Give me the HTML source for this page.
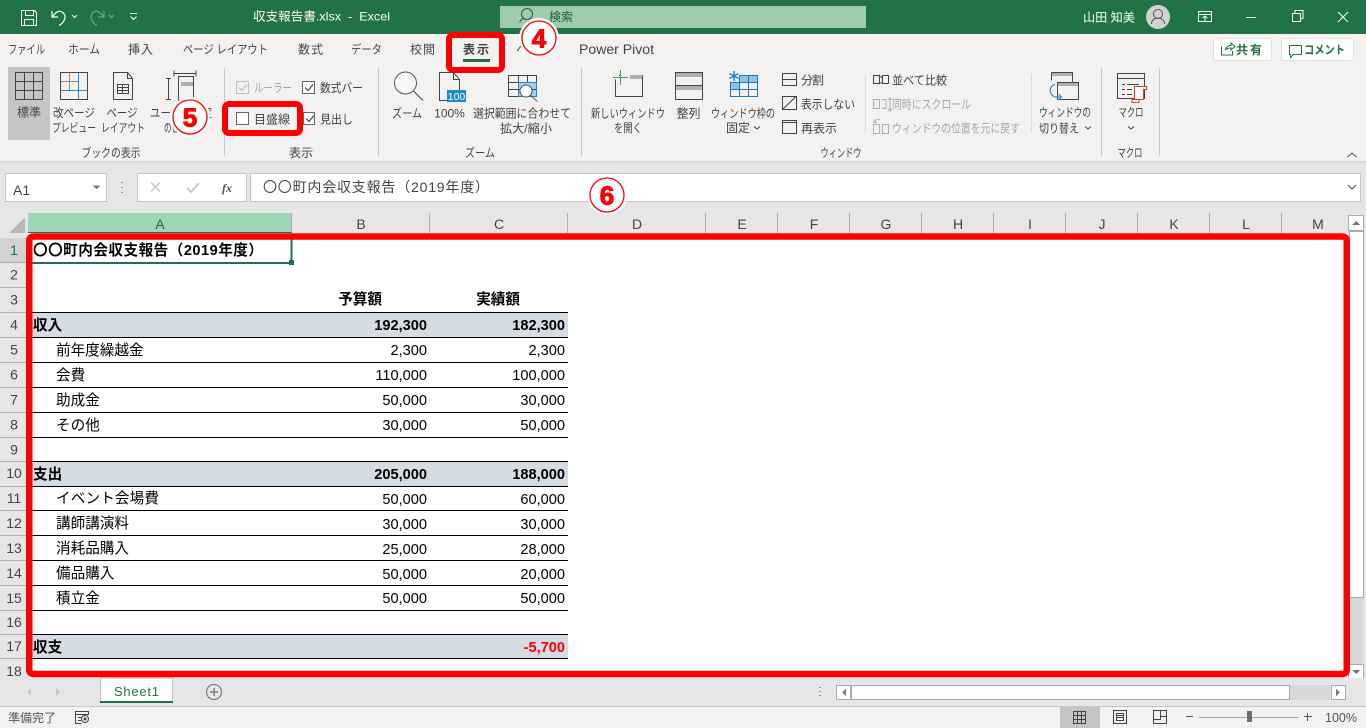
<!DOCTYPE html>
<html lang="ja"><head><meta charset="utf-8"><title>収支報告書.xlsx - Excel</title>
<style>
html,body{margin:0;padding:0;width:1366px;height:728px;overflow:hidden;background:#fff}
svg{display:block;font-family:"Liberation Sans","Noto Sans CJK JP",sans-serif}
text{white-space:pre}
.t{font-size:12px;fill:#444}
.d{font-size:12px;fill:#a6a6a6}
.m{text-anchor:middle}
.e{text-anchor:end}
.w{font-size:12px;fill:#fff}
.tab{font-size:12px;fill:#444}
.h{font-size:14px;fill:#444;text-anchor:middle}
.c{font-size:14.6px;fill:#000}
.b{font-size:14.6px;fill:#000;font-weight:bold}
.n{font-size:14.6px;fill:#000;text-anchor:end}
.nb{font-size:14.6px;fill:#000;font-weight:bold;text-anchor:end}
.r{shape-rendering:crispEdges}
.i{fill:none;stroke:#444;stroke-width:1}
.l{fill:none;stroke:#b0b0b0;stroke-width:1;shape-rendering:crispEdges}
</style></head><body>
<svg width="1366" height="728" viewBox="0 0 1366 728" xmlns="http://www.w3.org/2000/svg">
<!-- backgrounds -->
<rect class="r" width="1366" height="728" fill="#e6e6e6"/>
<rect class="r" width="1366" height="34" fill="#217346"/>
<rect class="r" y="34" width="1366" height="127" fill="#f3f2f1"/>
<rect class="r" y="161" width="1366" height="1" fill="#d4d3d2"/>
<rect class="r" y="162" width="1366" height="2" fill="#dedddc"/>
<!-- title bar -->
<g fill="none" stroke="#fff" stroke-width="1">
<path d="M21.5 10.5h13l2 2v13h-15zM25.5 10.5v5h8v-5M24.5 25.5v-6h9v6"/>
<path d="M52 11v6h6M52.5 16.5c3-4 6-6 8.500-5 4 1.500 5 6 3 9-1 2-3 4-5 5" stroke-width="1.200"/>
<path d="M72 15l2.500 2.500 2.500-2.500"/>
<g stroke="#7fae93"><path d="M104 11v6h-6M103.500 16.500c-3-4-6-6-8.500-5-4 1.500-5 6-3 9 1 2 3 4 5 5"/><path d="M109 15l2.500 2.500 2.500-2.500"/></g>
<path d="M130 13.500h7M130.500 16.500l3 3 3-3"/>
<path d="M1198.500 11.500h13v10h-13zM1198.500 14.500h13M1205 21v-5M1202.500 18l2.500-2 2.500 2"/>
<path d="M1246 17.500h10"/>
<path d="M1292.500 13.500h8v8h-8zM1295 13v-2.500h8v8h-2.500"/>
<path d="M1338 12l10 10M1348 12l-10 10"/>
</g>
<text class="w" x="253" y="20.500" textLength="137" lengthAdjust="spacingAndGlyphs">収支報告書.xlsx  -  Excel</text>
<rect class="r" x="500" y="6" width="366" height="22" fill="#9fcbb0"/>
<circle cx="527" cy="14" r="5.500" fill="none" stroke="#1d5f3a" stroke-width="1"/>
<path d="M523 18l-3.500 4" stroke="#1d5f3a" fill="none"/>
<text x="549" y="21" font-size="12" fill="#1d5f3a" textLength="24">検索</text>
<text class="w" x="1083" y="21.500" textLength="52" lengthAdjust="spacingAndGlyphs">山田 知美</text>
<circle cx="1158" cy="17" r="12" fill="#d2d2d2"/>
<circle cx="1158" cy="14" r="4.500" fill="none" stroke="#555"/>
<path d="M1151.500 24c0-4 3-6 6.500-6s6.500 2 6.500 6" fill="none" stroke="#555"/>
<!-- tabs -->
<text class="tab" x="8" y="53.500" textLength="37" lengthAdjust="spacingAndGlyphs">ファイル</text>
<text class="tab" x="68" y="53.500" textLength="32" lengthAdjust="spacingAndGlyphs">ホーム</text>
<text class="tab" x="128" y="53.500" textLength="25">挿入</text>
<text class="tab" x="183" y="53.500" textLength="85" lengthAdjust="spacingAndGlyphs">ページ レイアウト</text>
<text class="tab" x="298" y="53.500" textLength="25">数式</text>
<text class="tab" x="351" y="53.500" textLength="31" lengthAdjust="spacingAndGlyphs">データ</text>
<text class="tab" x="410" y="53.500" textLength="25">校閲</text>
<text class="tab" x="463" y="53.500" textLength="26" font-weight="bold">表示</text>
<rect class="r" x="463" y="59" width="27" height="3" fill="#217346"/>
<text class="tab" x="516" y="53.500" textLength="36" lengthAdjust="spacingAndGlyphs">ヘルプ</text>
<text x="579" y="54" style="font-size:13.5px;fill:#444" textLength="75" lengthAdjust="spacingAndGlyphs">Power Pivot</text>
<rect x="1213.500" y="38.500" width="58" height="22" rx="2" fill="#fff" stroke="#e3e1df"/>
<rect x="1281.500" y="38.500" width="72" height="22" rx="2" fill="#fff" stroke="#e3e1df"/>
<path d="M1221.500 46.500v8.500h11v-4M1225 50c1-3 3-4.500 6-4.500v-2.500l4 3.500-4 3.500v-2c-2 0-4 .500-6 2" fill="none" stroke="#217346"/>
<text x="1236" y="54" font-size="12" font-weight="bold" fill="#217346" textLength="26">共有</text>
<path d="M1289.500 45.500h12v9h-8l-3 3v-3h-1z" fill="none" stroke="#217346"/>
<text x="1304" y="54" font-size="12" font-weight="bold" fill="#217346" textLength="41" lengthAdjust="spacingAndGlyphs">コメント</text>
<!-- ribbon: book views -->
<rect class="r" x="8" y="67" width="42" height="73" fill="#c6c5c3"/>
<g class="i r">
<path d="M15.500 72.500h27v27h-27zM24.500 72.500v27M33.500 72.500v27M15.500 81.500h27M15.500 90.500h27"/>
<path d="M60.500 72.500h27v27h-27z"/>
<path d="M113.500 72.500h14l5 6v21h-19zM127.500 72.500v6h5"/>
<path d="M117.500 84.500h11v9h-11zM117.500 87.500h11M117.500 90.500h11M122.500 84.500v9"/>
<path d="M174 73.500h22M174 70.500v6M196 70.500v6M178.500 76.500h15v24h-15zM168.500 78.500v21M166 78.500h5M166 99.500h5"/>
</g>
<path d="M60.500 81.500h18M69.500 72.500v18" fill="none" stroke="#888" class="r"/>
<path d="M60.500 90.500h27M78.500 72.500v27" fill="none" stroke="#1f8ad6" stroke-width="1" class="r"/>
<rect class="r" x="181" y="82" width="12" height="4" fill="#b0b0b0"/>
<text class="t m" x="29" y="116.500">標準</text>
<text class="t m" x="74" y="117" textLength="42" lengthAdjust="spacingAndGlyphs">改ページ</text>
<text class="t m" x="74" y="132" textLength="44" lengthAdjust="spacingAndGlyphs">プレビュー</text>
<text class="t m" x="122" y="117" textLength="31" lengthAdjust="spacingAndGlyphs">ページ</text>
<text class="t m" x="123" y="132" textLength="44" lengthAdjust="spacingAndGlyphs">レイアウト</text>
<text class="t" x="150" y="117" textLength="62" lengthAdjust="spacingAndGlyphs">ユーザー設定</text>
<text class="t" x="164" y="132" textLength="30" lengthAdjust="spacingAndGlyphs">のビュー</text>
<text class="t m" x="111" y="157" textLength="59" lengthAdjust="spacingAndGlyphs">ブックの表示</text>
<rect class="r" x="224" y="68" width="1" height="88" fill="#c8c6c4"/>
<!-- show -->
<g fill="#fff" stroke="#666" class="r">
<rect x="302.500" y="81.500" width="12" height="12"/>
<rect x="303.500" y="112.500" width="11" height="12"/>
<rect x="236.500" y="112.500" width="12" height="12"/>
</g>
<rect x="236.500" y="81.500" width="12" height="12" fill="#f3f2f1" stroke="#c0c0c0" class="r"/>
<path d="M239 87.500l3 3 5-6" fill="none" stroke="#c0c0c0" stroke-width="1.200"/>
<path d="M305 87.500l3 3 5-6" fill="none" stroke="#444" stroke-width="1.200"/>
<path d="M306 118.500l3 3 5-6" fill="none" stroke="#444" stroke-width="1.200"/>
<text class="d" x="254" y="92" textLength="38" lengthAdjust="spacingAndGlyphs">ルーラー</text>
<text class="t" x="320" y="92" textLength="43" lengthAdjust="spacingAndGlyphs">数式バー</text>
<text class="t" x="254" y="123.500" textLength="36">目盛線</text>
<text class="t" x="320" y="123.500" textLength="33" lengthAdjust="spacingAndGlyphs">見出し</text>
<text class="t m" x="301" y="157">表示</text>
<rect class="r" x="378" y="68" width="1" height="88" fill="#c8c6c4"/>
<!-- zoom -->
<circle cx="405.500" cy="83" r="11" fill="#fff" fill-opacity=".4" stroke="#555"/>
<path d="M413.500 91l9.500 9.500" fill="none" stroke="#555" stroke-width="1.200"/>
<path class="i r" d="M439.500 72.500h14l6 7v21h-20zM453.500 72.500v7h6"/>
<rect class="r" x="447" y="90" width="19" height="12" fill="#1e88d0"/>
<text x="456.500" y="100" font-size="10.500" fill="#fff" text-anchor="middle">100</text>
<text class="t m" x="407" y="117.500" textLength="30" lengthAdjust="spacingAndGlyphs">ズーム</text>
<text class="t m" x="449.500" y="117.500">100%</text>
<text class="t m" x="522" y="117.500" textLength="98" lengthAdjust="spacingAndGlyphs">選択範囲に合わせて</text>
<text class="t m" x="526" y="132.500" textLength="52" lengthAdjust="spacingAndGlyphs">拡大/縮小</text>
<rect class="r" x="518" y="82" width="18" height="15" fill="#a6cfee"/>
<path class="i r" d="M508.500 75.500h28v21h-28zM508.500 82.500h28M508.500 89.500h28M518.500 75.500v21M527.500 75.500v7"/>
<path class="r" d="M518.500 82.500h18v14h-18z" fill="none" stroke="#1e88d0"/>
<circle cx="526" cy="91" r="6" fill="#fff" stroke="#555"/>
<path d="M530.500 95.500l7 6" stroke="#555" fill="none"/>
<text class="t m" x="480" y="157" textLength="30" lengthAdjust="spacingAndGlyphs">ズーム</text>
<rect class="r" x="581" y="68" width="1" height="88" fill="#c8c6c4"/>
<!-- window -->
<rect class="r" x="630" y="75" width="13" height="4" fill="#b0b0b0"/>
<path class="i r" d="M615.500 79.500v17h27v-21M620 75.500h-1M615.500 83.500v-2"/>
<path d="M613 77.500h15M620.500 70v15" stroke="#37a866" fill="none" class="r"/>
<path class="i r" d="M675.500 72.500h27v27h-27zM675.500 85.500h27"/>
<rect class="r" x="676" y="73" width="26" height="4" fill="#b0b0b0"/>
<rect class="r" x="676" y="86" width="26" height="4" fill="#b0b0b0"/>
<rect class="r" x="740" y="75" width="18" height="7" fill="#8dc1ea"/>
<rect class="r" x="730" y="82" width="10" height="7" fill="#8dc1ea"/>
<path d="M730.500 81.500v15h27v-21h-18v21M730.500 82.500h27M730.500 89.500h27M748.500 75.500v21" fill="none" stroke="#1e78c0" class="r"/>
<path d="M734 71v10M729.500 73.500l9 5M738.500 73.500l-9 5" stroke="#1e88d0" stroke-width="1.500" fill="none"/>
<text class="t m" x="628" y="117.500" textLength="74" lengthAdjust="spacingAndGlyphs">新しいウィンドウ</text>
<text class="t m" x="628" y="132" textLength="28" lengthAdjust="spacingAndGlyphs">を開く</text>
<text class="t m" x="688.500" y="117.500">整列</text>
<text class="t m" x="743" y="117.500" textLength="64" lengthAdjust="spacingAndGlyphs">ウィンドウ枠の</text>
<text class="t" x="726" y="132" textLength="24">固定</text>
<path d="M754 126.500l3 2.500 3-2.500" fill="none" stroke="#444"/>
<path class="i r" d="M782.500 73.500h14v12h-14zM782.500 79.500h14"/>
<path class="i r" d="M782.500 96.500h14v13h-14z"/>
<path d="M783 109l13-12.500" stroke="#444" fill="none"/>
<path class="i r" d="M782.500 120.500h14v13h-14zM782.500 122.500h14"/>
<text class="t" x="801" y="84.500" textLength="23">分割</text>
<text class="t" x="801" y="108.500" textLength="54" lengthAdjust="spacingAndGlyphs">表示しない</text>
<text class="t" x="801" y="132.500" textLength="36">再表示</text>
<rect class="r" x="865" y="74" width="1" height="59" fill="#dedcda"/>
<path class="i r" d="M873.500 75.500h6v8h-6zM882.500 75.500h6v8h-6z"/>
<path d="M879 75l3 3M879 83h3" stroke="#444" fill="none"/>
<path d="M873.500 99.500h6v9h-6zM882 99.500h4v9h-4M890 98v13M888 100l2-2 2 2M888 109l2 2 2-2" fill="none" stroke="#b0b0b0" class="r"/>
<path d="M873.500 124.500h6v9h-6zM882.500 124.500h6v9h-6zM875 122c1-3 3-3 5-2M874 119.500v3h3" fill="none" stroke="#b0b0b0"/>
<text class="t" x="892" y="84.500" textLength="55" lengthAdjust="spacingAndGlyphs">並べて比較</text>
<text class="d" x="892" y="108.500" textLength="79" lengthAdjust="spacingAndGlyphs">同時にスクロール</text>
<text class="d" x="892" y="132.500" textLength="128" lengthAdjust="spacingAndGlyphs">ウィンドウの位置を元に戻す</text>
<rect class="r" x="1031" y="74" width="1" height="59" fill="#dedcda"/>
<path class="i r" d="M1051.500 72.500h21v20M1051.500 72.500v8"/>
<rect class="r" x="1052" y="73" width="20" height="3" fill="#b0b0b0"/>
<rect class="r" x="1057.500" y="82.500" width="21" height="17" fill="#f3f2f1" stroke="#444"/>
<rect class="r" x="1058" y="83" width="20" height="3" fill="#b0b0b0"/>
<path d="M1055 84c-6 3-7 10 0 13h6M1058.500 94l3 3-3 3" fill="none" stroke="#2b8fd6" stroke-width="1.200"/>
<text class="t m" x="1065" y="116.500" textLength="52" lengthAdjust="spacingAndGlyphs">ウィンドウの</text>
<text class="t" x="1039" y="132.500" textLength="40" lengthAdjust="spacingAndGlyphs">切り替え</text>
<path d="M1085 126.500l3 2.500 3-2.500" fill="none" stroke="#444"/>
<text class="t m" x="841" y="157" textLength="41" lengthAdjust="spacingAndGlyphs">ウィンドウ</text>
<rect class="r" x="1101" y="68" width="1" height="88" fill="#c8c6c4"/>
<path class="i r" d="M1117.500 73.500h27v25h-27zM1117.500 78.500h27M1122 84.500h3M1127 84.500h12M1122 89.500h3M1127 89.500h5M1122 94.500h3M1127 94.500h5"/>
<rect x="1134.500" y="86.500" width="9" height="13" fill="#fff" stroke="#ee3535"/>
<path d="M1143 86.500h3.500v3h-3M1132 99.500h7v3h-7z" fill="#fff" stroke="#ee3535"/>
<text class="t m" x="1131" y="116.500" textLength="25" lengthAdjust="spacingAndGlyphs">マクロ</text>
<path d="M1128 126.500l3 2.500 3-2.500" fill="none" stroke="#444"/>
<text class="t m" x="1130" y="157" textLength="25" lengthAdjust="spacingAndGlyphs">マクロ</text>
<rect class="r" x="1159" y="68" width="1" height="88" fill="#c8c6c4"/>
<path d="M1347.500 157l4.500-4 4.500 4" fill="none" stroke="#555"/>
<!-- formula bar -->
<rect class="r" x="5.500" y="173.500" width="101" height="28" fill="#fff" stroke="#c6c6c6"/>
<text x="13" y="195" font-size="14" fill="#444">A1</text>
<path class="r" d="M93 185.500h7l-3.500 4z" fill="#777"/>
<path d="M122 182v1M122 187v1M122 192v1" stroke="#999" stroke-width="2" class="r"/>
<rect class="r" x="137.500" y="173.500" width="109" height="28" fill="#fff" stroke="#c6c6c6"/>
<path d="M151 182.500l9 9M160 182.500l-9 9" stroke="#c4c4c4" stroke-width="1.300" fill="none"/>
<path d="M187 188l4 4 8-9" stroke="#c4c4c4" stroke-width="1.800" fill="none"/>
<text x="222" y="192" font-size="12" font-style="italic" font-family="Liberation Serif" font-weight="bold" fill="#555">fx</text>
<rect class="r" x="250.500" y="173.500" width="1110" height="28" fill="#fff" stroke="#c6c6c6"/>
<text x="263" y="192" font-size="14" fill="#444" textLength="226">〇〇町内会収支報告（2019年度）</text>
<path d="M1348 185l4 4 4-4" fill="none" stroke="#777" stroke-width="1.500"/>
<!-- sheet -->
<rect class="r" x="29" y="233" width="1319" height="445" fill="#fff"/>
<path class="r" d="M9 233l16-16v16z" fill="#b8b8b8"/>
<rect class="r" x="28" y="213" width="264" height="20" fill="#9fd5b7"/>
<rect class="r" x="0" y="238" width="28" height="25" fill="#d2d2d2"/>
<path class="l" d="M291.500 213v20M429.500 213v20M567.500 213v20M705.500 213v20M777.500 213v20M849.500 213v20M921.500 213v20M993.500 213v20M1065.500 213v20M1137.500 213v20M1209.500 213v20M1281.500 213v20"/>
<path class="r" d="M28 232.500h264" stroke="#217346" fill="none"/>
<text class="h" x="160" y="229" style="fill:#1d6b41">A</text>
<text class="h" x="361" y="229">B</text><text class="h" x="499" y="229">C</text><text class="h" x="637" y="229">D</text><text class="h" x="742" y="229">E</text><text class="h" x="814" y="229">F</text><text class="h" x="886" y="229">G</text><text class="h" x="958" y="229">H</text><text class="h" x="1030" y="229">I</text><text class="h" x="1102" y="229">J</text><text class="h" x="1174" y="229">K</text><text class="h" x="1246" y="229">L</text><text class="h" x="1318" y="229">M</text>
<path class="l" d="M0 262.500h28M0 287.500h28M0 312.500h28M0 337.500h28M0 362.500h28M0 387.500h28M0 412.500h28M0 437.500h28M0 461.500h28M0 486.500h28M0 510.500h28M0 535.500h28M0 560.500h28M0 585.500h28M0 610.500h28M0 634.500h28M0 658.500h28"/>
<g>
<text class="h" x="14" y="255" style="fill:#1d6b41">1</text><text class="h" x="14" y="279.500">2</text><text class="h" x="14" y="304.500">3</text><text class="h" x="14" y="329.500">4</text><text class="h" x="14" y="354.500">5</text><text class="h" x="14" y="379.500">6</text><text class="h" x="14" y="404.500">7</text><text class="h" x="14" y="429.500">8</text><text class="h" x="14" y="454.500">9</text><text class="h" x="14" y="478">10</text><text class="h" x="14" y="503">11</text><text class="h" x="14" y="528">12</text><text class="h" x="14" y="553">13</text><text class="h" x="14" y="578">14</text><text class="h" x="14" y="603">15</text><text class="h" x="14" y="627">16</text><text class="h" x="14" y="651">17</text><text class="h" x="14" y="676">18</text>
</g>
<rect class="r" x="29" y="313" width="539" height="24" fill="#d6dce4"/>
<rect class="r" x="29" y="462" width="539" height="24" fill="#d6dce4"/>
<rect class="r" x="29" y="635" width="539" height="23" fill="#d6dce4"/>
<path class="r" fill="none" stroke="#000" d="M29 312.500h539M29 337.500h539M29 362.500h539M29 387.500h539M29 412.500h539M29 437.500h539M29 461.500h539M29 486.500h539M29 510.500h539M29 535.500h539M29 560.500h539M29 585.500h539M29 610.500h539M29 634.500h539M29 658.500h539"/>
<text class="b" x="33" y="255" textLength="230">〇〇町内会収支報告（2019年度）</text>
<text class="nb" x="382" y="304">予算額</text><text class="nb" x="520" y="304">実績額</text>
<text class="b" x="33" y="330">収入</text><text class="nb" x="427" y="330">192,300</text><text class="nb" x="565" y="330">182,300</text>
<text class="c" x="56" y="355">前年度繰越金</text><text class="n" x="427" y="355">2,300</text><text class="n" x="565" y="355">2,300</text>
<text class="c" x="56" y="380">会費</text><text class="n" x="427" y="380">110,000</text><text class="n" x="565" y="380">100,000</text>
<text class="c" x="56" y="405">助成金</text><text class="n" x="427" y="405">50,000</text><text class="n" x="565" y="405">30,000</text>
<text class="c" x="56" y="430">その他</text><text class="n" x="427" y="430">30,000</text><text class="n" x="565" y="430">50,000</text>
<text class="b" x="33" y="479">支出</text><text class="nb" x="427" y="479">205,000</text><text class="nb" x="565" y="479">188,000</text>
<text class="c" x="56" y="503" textLength="103">イベント会場費</text><text class="n" x="427" y="504">50,000</text><text class="n" x="565" y="504">60,000</text>
<text class="c" x="56" y="528">講師講演料</text><text class="n" x="427" y="529">30,000</text><text class="n" x="565" y="529">30,000</text>
<text class="c" x="56" y="553">消耗品購入</text><text class="n" x="427" y="554">25,000</text><text class="n" x="565" y="554">28,000</text>
<text class="c" x="56" y="578">備品購入</text><text class="n" x="427" y="579">50,000</text><text class="n" x="565" y="579">20,000</text>
<text class="c" x="56" y="603">積立金</text><text class="n" x="427" y="603">50,000</text><text class="n" x="565" y="603">50,000</text>
<text class="b" x="33" y="652">収支</text><text class="nb" x="565" y="652" style="fill:#f00">-5,700</text>
<!-- selection -->
<path class="r" d="M291.500 238v25M32 263h260" stroke="#217346" stroke-width="2" fill="none"/>
<rect class="r" x="289" y="260" width="5" height="5" fill="#217346"/>
<!-- v scrollbar -->
<rect class="r" x="1348" y="205" width="18" height="473" fill="#e6e6e6"/>
<rect class="r" x="1350" y="597" width="13" height="69" fill="#d8d8d8"/>
<rect class="r" x="1348.500" y="215.500" width="15" height="15" fill="#fff" stroke="#ababab"/>
<rect class="r" x="1349.500" y="231.500" width="14" height="366" fill="#fff" stroke="#ababab"/>
<rect class="r" x="1348.500" y="664.500" width="15" height="15" fill="#fff" stroke="#ababab"/>
<path class="r" d="M1352 225h8l-4-4z" fill="#777"/>
<path class="r" d="M1352 670h8l-4 4z" fill="#777"/>
<!-- sheet bar -->
<rect class="r" y="678" width="1366" height="28" fill="#e6e6e6"/>
<path class="r" d="M31 688v8l-4-4z" fill="#c8c8c8"/>
<path class="r" d="M56 688v8l4-4z" fill="#c8c8c8"/>
<rect class="r" x="100.500" y="678" width="72" height="24" fill="#fff" stroke="#c0c0c0"/>
<rect class="r" x="100" y="701" width="73" height="2" fill="#217346"/>
<text x="114" y="696" font-size="13" fill="#217346" textLength="45">Sheet1</text>
<circle cx="214" cy="692" r="7.500" fill="none" stroke="#808080" stroke-width="1.200"/>
<path d="M210 692h8M214 688v8" stroke="#808080" stroke-width="1.500" fill="none"/>
<path d="M820 687v1M820 691v1M820 695v1" stroke="#999" stroke-width="2" class="r"/>
<rect class="r" x="836.500" y="685.500" width="14" height="14" fill="#fff" stroke="#ababab"/>
<path class="r" d="M846 689v7l-4-3.500z" fill="#777"/>
<rect class="r" x="851" y="685" width="479" height="15" fill="#d8d8d8"/>
<rect class="r" x="851.500" y="685.500" width="438" height="14" fill="#fff" stroke="#ababab"/>
<rect class="r" x="1331.500" y="685.500" width="14" height="14" fill="#fff" stroke="#ababab"/>
<path class="r" d="M1336 689v7l4-3.500z" fill="#777"/>
<!-- status bar -->
<rect class="r" y="706" width="1366" height="22" fill="#f3f2f1"/>
<rect class="r" y="706" width="1366" height="1" fill="#c8c8c8"/>
<text x="8" y="722" font-size="12" fill="#555" textLength="48">準備完了</text>
<path class="i r" d="M75.500 711.500h13v3h-13zM75.500 714.500v9h6M78 717.500h4M78 720.500h3"/>
<circle cx="85" cy="719" r="3.500" fill="none" stroke="#444"/><circle cx="85" cy="719" r="1.500" fill="#444"/>
<rect class="r" x="1060" y="707" width="40" height="21" fill="#c6c5c3"/>
<path class="i r" d="M1073.500 711.500h12v12h-12zM1077.500 711.500v12M1081.500 711.500v12M1073.500 715.500h12M1073.500 719.500h12"/>
<path class="i r" d="M1113.500 710.500h13v13h-13zM1116.500 713.500h7v7h-7zM1117 715.500h6M1117 717.500h6"/>
<path class="i r" d="M1153.500 710.500h13v13h-13zM1153.500 719.500h7v-9M1160.500 716.500h6"/>
<path class="r" d="M1186 716.500h7M1304 716.500h8M1307.500 713v8" stroke="#555" fill="none"/>
<rect class="r" x="1199" y="717" width="100" height="1" fill="#a8a8a8"/>
<rect class="r" x="1247" y="711" width="5" height="11" fill="#6e6e6e"/>
<text x="1325" y="722" font-size="12.500" fill="#555">100%</text>
<!-- red highlights -->
<rect x="29.250" y="236.500" width="1317.500" height="437.500" rx="4" fill="none" stroke="#f00" stroke-width="6.500"/>
<rect x="449" y="35" width="53" height="35" rx="4" fill="none" stroke="#f00" stroke-width="6"/>
<rect x="225" y="104" width="75" height="29" rx="4" fill="none" stroke="#f00" stroke-width="6"/>
<!-- numbered circles -->
<g>
<circle cx="539" cy="38" r="20" fill="#fff" fill-opacity=".92"/>
<circle cx="539" cy="38" r="17" fill="#fff" fill-opacity=".5" stroke="#f00" stroke-width="1.300"/>
<text x="539" y="47.500" font-size="26" font-weight="bold" fill="#f00" text-anchor="middle" stroke="#f00" stroke-width="1">4</text>
</g>
<g>
<circle cx="190" cy="117" r="20" fill="#fff" fill-opacity=".92"/>
<circle cx="190" cy="117" r="17" fill="#fff" fill-opacity=".5" stroke="#f00" stroke-width="1.300"/>
<text x="190" y="126.500" font-size="26" font-weight="bold" fill="#f00" text-anchor="middle" stroke="#f00" stroke-width="1">5</text>
</g>
<g>
<circle cx="607" cy="195" r="20" fill="#fff" fill-opacity=".92"/>
<circle cx="607" cy="195" r="17" fill="#fff" fill-opacity=".5" stroke="#f00" stroke-width="1.300"/>
<text x="607" y="204.500" font-size="26" font-weight="bold" fill="#f00" text-anchor="middle" stroke="#f00" stroke-width="1">6</text>
</g>
</svg>
</body></html>
